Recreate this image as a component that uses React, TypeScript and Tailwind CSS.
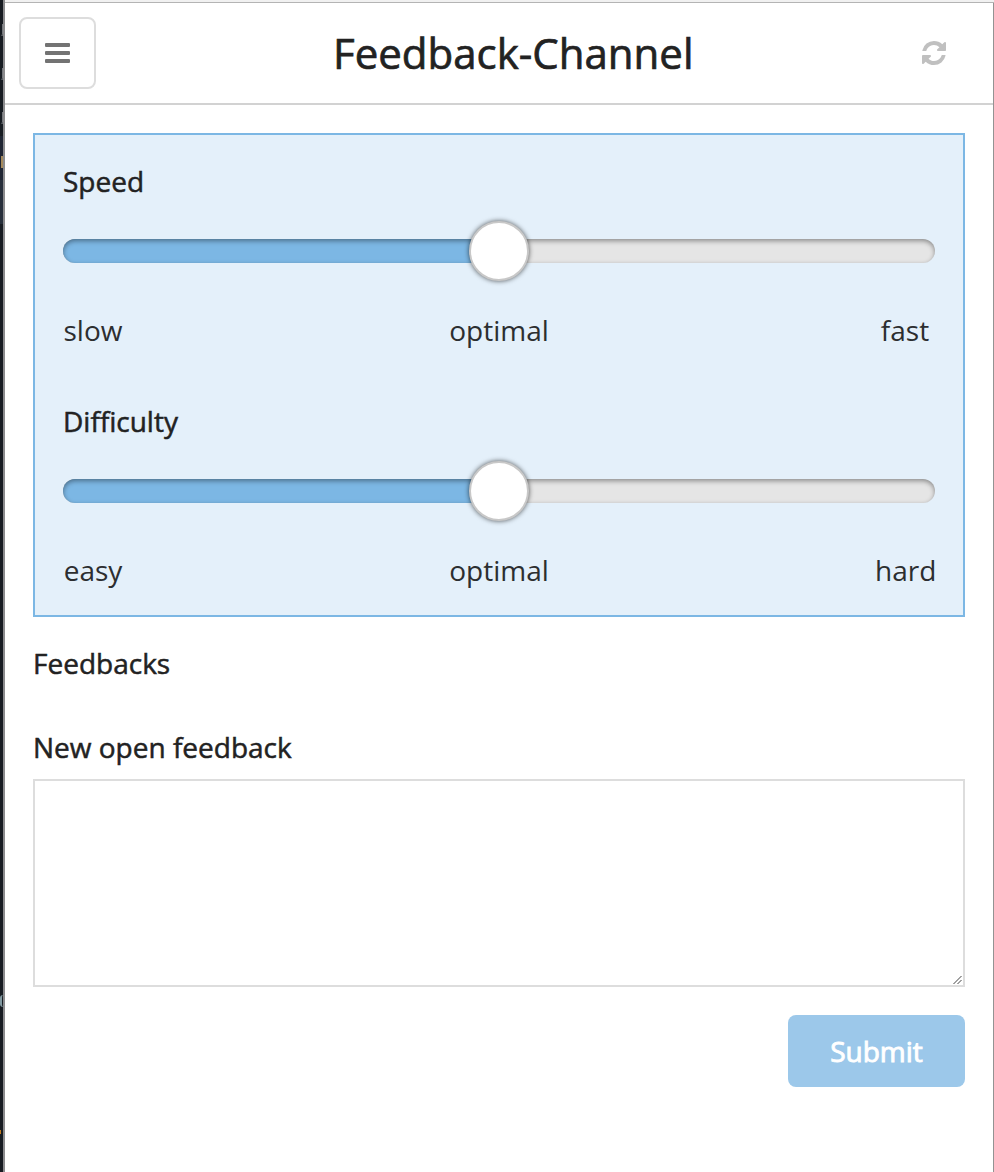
import React from "react";

type ScaleProps = { title: string; low: string; mid: string; high: string };

function Scale({ title, low, mid, high }: ScaleProps) {
  return (
    <section className="h-[240px] pt-[26px]">
      <h2 className="h-10 text-[28px] leading-10 font-normal [-webkit-text-stroke:0.5px_#222]">{title}</h2>
      <div className="mt-[38px] flex h-6 items-center rounded-full bg-[#e5e5e5] shadow-[inset_0_2px_5px_rgba(0,0,0,0.4)]">
        <div className="h-6 w-[436px] rounded-l-full bg-[#7cb7e4] shadow-[inset_0_2px_5px_rgba(0,0,0,0.4)]" />
        <div className="-ml-[30px] size-[60px] shrink-0 rounded-full border-2 border-[#c8c8c8] bg-white shadow-[0_0_5px_rgba(0,0,0,0.65)]" />
      </div>
      <div className="mt-[47px] flex justify-between text-[28px] leading-10 font-normal text-[#2c2e30]">
        <span className="w-[60px] text-center">{low}</span>
        <span className="w-[100px] text-center">{mid}</span>
        <span className="w-[60px] text-center">{high}</span>
      </div>
    </section>
  );
}

export default function App() {
  return (
    <div className="flex h-[1172px] w-[994px] overflow-hidden bg-white font-['Open_Sans','Noto_Sans',sans-serif] text-[#222]">
      <div className="flex w-[3px] shrink-0 flex-col bg-[#171c22]">
        <div className="mt-[24px] ml-px h-3 border-b-2 border-l border-[#5d6167] border-l-[#171c22] bg-[#74777c]" />
        <div className="mt-[32px] ml-px h-3 border-b-2 border-l border-[#5d6167] border-l-[#171c22] bg-[#74777c]" />
        <div className="mt-[32px] ml-px h-3 border-b-2 border-l border-[#5d6167] border-l-[#171c22] bg-[#74777c]" />
        <div className="mt-[12px] h-[44px] bg-[#1f2533] pt-5">
          <div className="ml-px h-3 w-[2px] bg-[#a58a5c]" />
        </div>
        <div className="h-[44px] bg-[#272f3b]" />
        <div className="mt-[771px] h-3 w-[3px] rounded-l-full border-l-2 border-[#8199a1]" />
        <div className="mt-[123px] h-1 w-px bg-[#c27a20]" />
      </div>
      <div className="w-[2px] shrink-0 bg-[#8b8b8d]" />
      <div className="flex min-w-0 flex-1 flex-col">
        <div className="h-[3px] shrink-0 border-b border-[#b4b4b4] bg-[#f1f1f1]" />
        <div className="flex flex-1 flex-col border-r border-[#939393]">
          <header className="flex h-[102px] shrink-0 items-start justify-between border-b-2 border-[#d2d2d2] pr-[47.500px] pl-[14px]">
            <button aria-label="Menu" className="mt-[14px] flex h-[72px] w-[77px] flex-col items-center justify-center gap-1 rounded-lg border-2 border-[#ddd] pr-px">
              <span className="h-1 w-[25px] rounded-[1px] bg-[#737373]" />
              <span className="h-1 w-[25px] rounded-[1px] bg-[#737373]" />
              <span className="h-1 w-[25px] rounded-[1px] bg-[#737373]" />
            </button>
            <h1 className="mt-[18px] ml-[9px] text-[42px] leading-[64px] font-normal [-webkit-text-stroke:0.7px_#222]">Feedback-Channel</h1>
            <svg className="mt-[38px] h-6 w-6 fill-[#c0c0c0]" viewBox="0 0 1536 1536">
              <path d="M1511 928q0 5-1 7-64 268-268 434.500T764 1536q-146 0-282.500-55T238 1324l-129 129q-19 19-45 19t-45-19-19-45V960q0-26 19-45t45-19h448q26 0 45 19t19 45-19 45l-137 137q71 66 161 102t187 36q134 0 250-65t186-179q11-17 53-117 8-23 30-23h192q13 0 22.500 9.500t9.500 22.500zm25-800v448q0 26-19 45t-45 19h-448q-26 0-45-19t-19-45 19-45l138-138Q969 256 768 256q-134 0-250 65T332 500q-11 17-53 117-8 23-30 23H50q-13 0-22.500-9.500T18 608v-7q65-268 270-434.500T768 0q146 0 284 55.500T1297 212l130-129q19-19 45-19t45 19 19 45z" />
            </svg>
          </header>
          <main className="flex flex-col px-7 pt-7">
            <div className="h-[484px] border-2 border-[#7cb7e4] bg-[#e4f0fa] px-7">
              <Scale title="Speed" low="slow" mid="optimal" high="fast" />
              <Scale title="Difficulty" low="easy" mid="optimal" high="hard" />
            </div>
            <h2 className="mt-[26px] text-[28px] leading-10 font-normal [-webkit-text-stroke:0.5px_#222]">Feedbacks</h2>
            <label htmlFor="feedback" className="mt-[44px] text-[28px] leading-10 font-normal [-webkit-text-stroke:0.5px_#222]">New open feedback</label>
            <textarea id="feedback" className="mt-[12px] block h-[208px] resize-none border-2 border-[#ddd] bg-white" />
            <svg className="relative mt-[-13px] mr-[2px] h-[11px] w-[11px] self-end stroke-[#444]" viewBox="0 0 11 11" fill="none">
              <path d="M1.500 10 9.500 2M5.500 10 9.500 6" />
            </svg>
            <button className="mt-[30px] h-[72px] w-[177px] self-end rounded-lg bg-[#9cc8ea] text-[28px] font-normal text-white [-webkit-text-stroke:0.9px_white]">Submit</button>
          </main>
        </div>
      </div>
    </div>
  );
}
